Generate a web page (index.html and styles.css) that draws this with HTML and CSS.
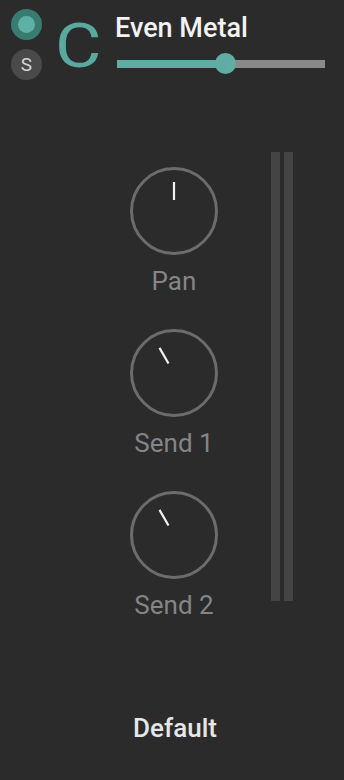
FILE: index.html
```html
<!DOCTYPE html>
<html>
<head>
<meta charset="utf-8">
<link rel="stylesheet" href="styles.css">
</head>
<body>
<div class="strip">
  <header class="head">
    <div class="btns">
      <div class="btn-on"><div class="btn-dot"></div></div>
      <div class="btn-s">S</div>
    </div>
    <div class="letter">C</div>
    <div class="titlecol">
      <div class="title">Even Metal</div>
      <div class="slider">
        <div class="fill" style="width:110px"></div>
        <div class="thumb" style="left:98px"></div>
      </div>
    </div>
  </header>
  <main class="main">
    <div class="knobs">
      <div class="knob">
        <svg width="90" height="90" viewBox="0 0 90 90">
          <circle cx="45" cy="45" r="42.5" fill="none" stroke="#6c6c6c" stroke-width="3"/>
          <line x1="45" y1="34" x2="45" y2="16" stroke="#f2f2f2" stroke-width="2.2"/>
        </svg>
        <div class="label">Pan</div>
      </div>
      <div class="knob">
        <svg width="90" height="90" viewBox="0 0 90 90">
          <circle cx="45" cy="45" r="42.5" fill="none" stroke="#6c6c6c" stroke-width="3"/>
          <line x1="45" y1="34" x2="45" y2="16" stroke="#f2f2f2" stroke-width="2.2" transform="rotate(-30 45 45)"/>
        </svg>
        <div class="label">Send 1</div>
      </div>
      <div class="knob">
        <svg width="90" height="90" viewBox="0 0 90 90">
          <circle cx="45" cy="45" r="42.5" fill="none" stroke="#6c6c6c" stroke-width="3"/>
          <line x1="45" y1="34" x2="45" y2="16" stroke="#f2f2f2" stroke-width="2.2" transform="rotate(-30 45 45)"/>
        </svg>
        <div class="label">Send 2</div>
      </div>
    </div>
    <div class="meters">
      <div class="meter"></div>
      <div class="meter"></div>
    </div>
  </main>
  <footer class="foot">Default</footer>
</div>
</body>
</html>
```
FILE: styles.css
```css
html, body {
  margin: 0;
  padding: 0;
  background: #2b2b2b;
}
body {
  font-family: Roboto, "Liberation Sans", sans-serif;
  width: 344px;
  height: 780px;
  overflow: hidden;
}
.strip {
  display: flex;
  flex-direction: column;
  height: 780px;
}
.head {
  display: flex;
  align-items: flex-start;
  height: 80px;
  box-sizing: border-box;
  padding: 9px 0 0 11px;
}
.btns {
  display: flex;
  flex-direction: column;
  gap: 9px;
}
.btn-on {
  width: 31px;
  height: 31px;
  border-radius: 50%;
  background: #387b71;
  display: flex;
  align-items: center;
  justify-content: center;
}
.btn-dot {
  width: 17px;
  height: 17px;
  border-radius: 50%;
  background: #5fb0a5;
}
.btn-s {
  width: 31px;
  height: 31px;
  border-radius: 50%;
  background: #4a4a4a;
  color: #d6d6d6;
  font-size: 19px;
  line-height: 31px;
  text-align: center;
}
.letter {
  width: 44px;
  font-size: 62px;
  line-height: 62px;
  color: #5aa99f;
  margin: 6px 0 0 13px;
  transform: scaleX(1.15);
  transform-origin: left center;
}
.titlecol {
  display: flex;
  flex-direction: column;
  margin: 4px 0 0 16px;
}
.title {
  font-size: 27px;
  line-height: 30px;
  font-weight: 500;
  color: #f2f2f2;
}
.slider {
  position: relative;
  width: 208px;
  height: 8px;
  background: #8a8a8a;
  margin: 17px 0 0 2px;
}
.fill {
  height: 8px;
  background: #5fada3;
}
.thumb {
  position: absolute;
  top: -7px;
  width: 21px;
  height: 21px;
  border-radius: 50%;
  background: #5fada3;
}
.main {
  display: flex;
  align-items: flex-start;
}
.knobs {
  display: flex;
  flex-direction: column;
  align-items: center;
  width: 130px;
  margin: 86px 0 0 109px;
  gap: 32px;
}
.knob {
  display: flex;
  flex-direction: column;
  align-items: center;
}
.knob svg {
  display: block;
}
.label {
  margin-top: 10px;
  font-size: 26px;
  line-height: 30px;
  color: #858585;
}
.meters {
  display: flex;
  gap: 4px;
  margin: 72px 0 0 32px;
}
.meter {
  width: 9px;
  height: 449px;
  background: #444444;
}
.foot {
  margin-top: auto;
  margin-bottom: 37px;
  padding-left: 6px;
  text-align: center;
  font-size: 26px;
  line-height: 30px;
  font-weight: 500;
  color: #e6e6e6;
}
```
